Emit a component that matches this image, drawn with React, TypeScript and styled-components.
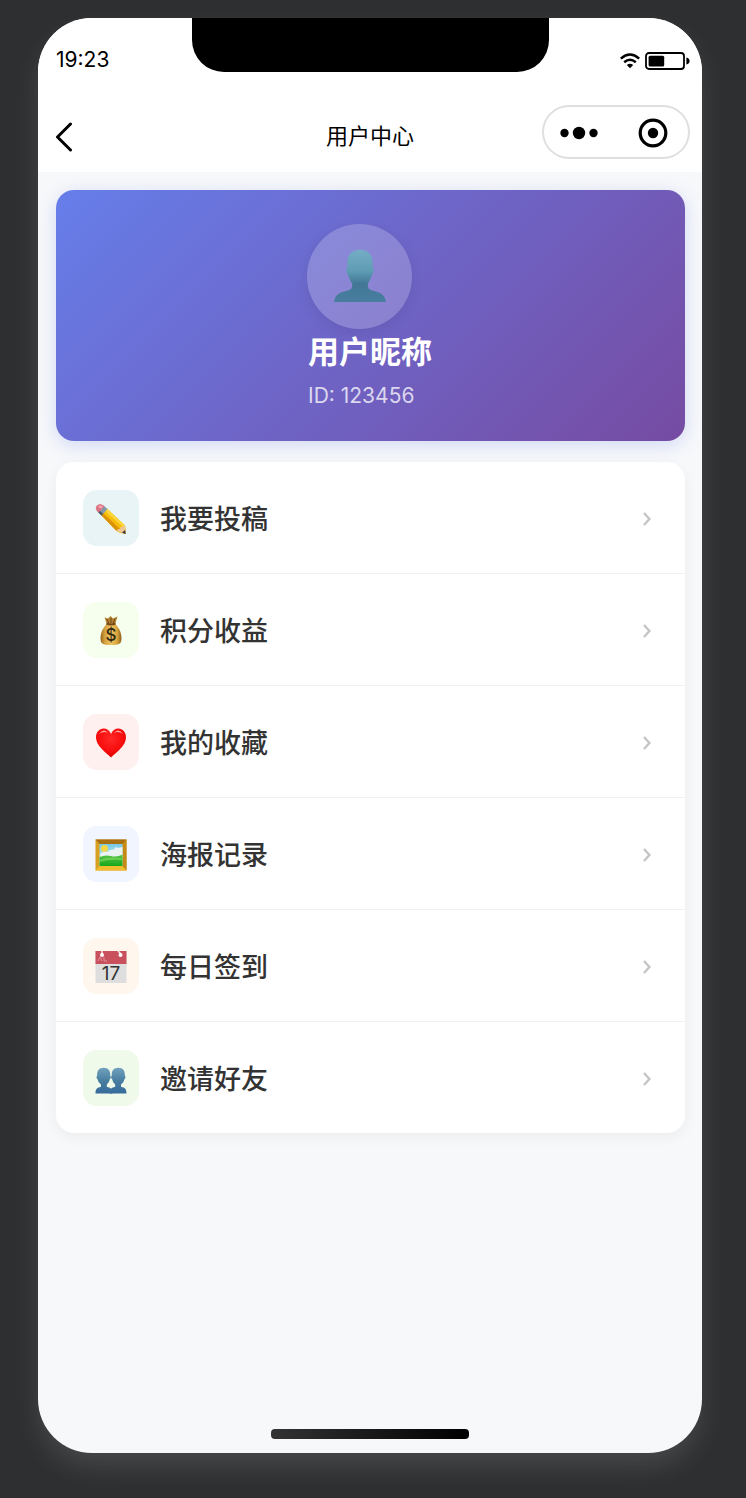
import React from 'react';
import styled, { createGlobalStyle } from 'styled-components';

const GlobalStyle = createGlobalStyle`
  * { box-sizing: border-box; }
  body {
    margin: 0;
    background: #2e2f31;
    font-family: Inter, "Noto Sans CJK SC", sans-serif;
    color: #000;
  }
  button { font: inherit; color: inherit; border: 0; background: none; padding: 0; cursor: pointer; }
  svg { display: block; }
`;

const Stage = styled.div`
  min-height: 100vh;
  display: flex;
  padding: 18px 44px 45px 38px;
`;

const Phone = styled.div`
  flex: 1;
  display: flex;
  flex-direction: column;
  overflow: hidden;
  border-radius: 54px;
  background: #f7f8fa;
  box-shadow: 0 14px 28px -2px rgba(205, 210, 205, 0.16);
`;

const Header = styled.header`
  background: #fff;
`;

const StatusBar = styled.div`
  display: grid;
  grid-template-columns: 1fr auto 1fr;
  align-items: center;
  height: 82px;
`;

const Time = styled.time`
  padding: 2px 0 0 18px;
  font-size: 21px;
  line-height: 26px;
`;

const Notch = styled.div`
  align-self: start;
  width: 357px;
  height: 54px;
  border-radius: 0 0 32px 32px;
  background: #000;
`;

const StatusIcons = styled.div`
  display: flex;
  justify-content: flex-end;
  align-items: center;
  gap: 5px;
  padding: 3px 12px 0 0;
`;

const NavBar = styled.div`
  display: grid;
  grid-template-columns: 1fr auto 1fr;
  align-items: center;
  height: 72px;
  padding: 0 12px;
`;

const BackButton = styled.button`
  justify-self: start;
  padding: 2px 0 0 4px;
`;

const Title = styled.h1`
  margin: 0;
  font-size: 22px;
  font-weight: 400;
  line-height: 32px;
`;

const Capsule = styled.div`
  justify-self: end;
  display: flex;
  justify-content: space-between;
  align-items: center;
  width: 148px;
  height: 54px;
  margin-bottom: 8px;
  padding: 2px 20px 0 15px;
  border: 2px solid #dfdfdf;
  border-radius: 27px;
`;

const CapsuleButton = styled.button``;

const Content = styled.main`
  flex: 1;
  display: flex;
  flex-direction: column;
  gap: 21px;
  padding: 18px 17px 18px 18px;
  overflow: hidden;
`;

const ProfileCard = styled.section`
  display: flex;
  justify-content: center;
  padding: 34px 27px 32px;
  border-radius: 18px;
  background: linear-gradient(135deg, #667eea 0%, #764ba2 100%);
  box-shadow: 0 4px 18px rgba(102, 126, 234, 0.26);
`;

const Profile = styled.div`
  display: flex;
  flex-direction: column;
  align-items: flex-start;
  width: 127px;
`;

const Avatar = styled.div`
  display: flex;
  align-items: center;
  justify-content: center;
  width: 105px;
  height: 105px;
  padding-bottom: 2px;
  border-radius: 50%;
  background: rgba(255, 255, 255, 0.2);
  box-shadow: 0 4px 14px rgba(0, 0, 0, 0.08);
`;

const Nickname = styled.h2`
  margin: 0;
  padding-left: 1px;
  color: #fff;
  font-size: 31px;
  font-weight: 700;
  line-height: 46px;
`;

const UserId = styled.p`
  margin: 8px 0 0;
  padding-left: 1px;
  color: rgba(255, 255, 255, 0.76);
  font-size: 21px;
  line-height: 26px;
`;

const Menu = styled.ul`
  margin: 0;
  padding: 0;
  list-style: none;
  border-radius: 18px;
  background: #fff;
  box-shadow: 0 4px 14px rgba(0, 0, 0, 0.05);
  overflow: hidden;
`;

const MenuItem = styled.li`
  padding-top: 1px;

  & + & {
    border-top: 1px solid #f0f0f1;
  }
`;

const MenuButton = styled.button`
  display: flex;
  align-items: center;
  gap: 21px;
  width: 100%;
  height: 110px;
  padding: 0 33px 0 27px;
  text-align: left;
`;

const IconTile = styled.span<{ $tint: string }>`
  display: flex;
  align-items: center;
  justify-content: center;
  width: 56px;
  height: 56px;
  padding-top: 2px;
  border-radius: 14px;
  background: ${(p) => p.$tint};
`;

const Label = styled.span`
  flex: 1;
  padding-top: 4px;
  color: #333;
  font-size: 27px;
  font-weight: 500;
  line-height: 38px;
`;

const HomeIndicator = styled.div`
  align-self: center;
  width: 198px;
  height: 10px;
  margin-bottom: 14px;
  border-radius: 4px;
  background: linear-gradient(90deg, #333, #000);
`;

const Wifi = () => (
  <svg width="20" height="16" viewBox="0 0 20 16" fill="none" stroke="#000" strokeWidth="2.5" aria-hidden="true">
    <path d="M.8 5.6Q10-2.6 19.2 5.6" />
    <path d="M4.2 9.2Q10 4.4 15.8 9.2" />
    <path d="M6.8 12Q10 9.4 13.2 12L10 15.3Z" fill="#000" stroke="none" />
  </svg>
);

const Battery = () => (
  <svg width="45" height="18" viewBox="0 0 45 18" aria-hidden="true">
    <rect x="1" y="1" width="38" height="16" rx="3" fill="none" stroke="#000" strokeWidth="1.8" />
    <rect x="3.6" y="3.8" width="15.6" height="10.6" rx="1.5" />
    <path d="M41.4 5.6C45.6 6 45.6 12 41.4 12.4Z" />
  </svg>
);

const Chevron = () => (
  <svg width="10" height="16" viewBox="0 0 10 16" fill="none" stroke="#c4c4c4" strokeWidth="2.3" aria-hidden="true">
    <path d="M2 3L7.400 9L2 15" />
  </svg>
);

const PersonIcon = () => (
  <svg width="54" height="54" viewBox="0 0 54 54" aria-hidden="true">
    <defs>
      <linearGradient id="person" x1="0" y1="0" x2="0" y2="1">
        <stop offset="0" stopColor="#73adc4" />
        <stop offset=".4" stopColor="#5f9db5" />
        <stop offset=".65" stopColor="#427895" />
        <stop offset="1" stopColor="#487da0" />
      </linearGradient>
    </defs>
    <path
      fill="url(#person)"
      d="M27 .8C35 .8 40 6 39.600 14.500C39.600 16.500 39.500 18 39.800 19.500C41.300 20 40.700 25 38.700 26C37.800 30 36.500 32 34.800 34.500V37C35 40 37 41.200 41 42C48.500 43.500 52 46.500 53 53H1C2 46.500 5.500 43.500 13 42C17 41.200 19 40 19.200 37V34.500C17.500 32 16.200 30 15.300 26C13.300 25 12.700 20 14.200 19.500C14.500 18 14.400 16.500 14.400 14.500C14 6 19 .8 27 .8Z"
    />
  </svg>
);

const PencilIcon = () => (
  <svg width="32" height="32" viewBox="0 0 32 32" aria-hidden="true">
    <path d="M6 12L12 5.500L30 22.500Q31.500 27 30.500 31Q25 30.500 21.500 28Z" fill="#f6bd0b" />
    <path d="M6 12L8 10L25 26L21.500 28Z" fill="#dc9206" />
    <path d="M10 8L12 5.500L30 22.500L28 24Z" fill="#ffd53e" />
    <path d="M21.500 28Q23 25 25 26Q25 23 28 24Q28 22 30 22.500L30.800 31Z" fill="#edc794" />
    <path d="M27 29.800L30 27L30.800 31Z" fill="#333" />
    <path d="M2.500 8.500L8.500 2.500L12.500 6L6.500 12.500Z" fill="#8399ab" />
    <path d="M2.500 8.500L4 7L8 11L6.500 12.500Z" fill="#46535d" />
    <path d="M2.500 8.500Q-.5 5.500 2 2.500Q5-.5 8.500 2.500L9.500 3.500L3.500 9.500Z" fill="#dc7181" />
    <path d="M3 4Q5 1 8 3.500L6 6Z" fill="#f3a2ae" />
  </svg>
);

const MoneyIcon = () => (
  <svg width="32" height="32" viewBox="0 0 32 32" aria-hidden="true">
    <defs>
      <linearGradient id="bag" x1="0" y1="0" x2="1" y2="0">
        <stop offset="0" stopColor="#96651b" />
        <stop offset=".2" stopColor="#d3a03e" />
        <stop offset=".5" stopColor="#f0c663" />
        <stop offset=".8" stopColor="#d6a23c" />
        <stop offset="1" stopColor="#8d5b18" />
      </linearGradient>
    </defs>
    <path d="M9.500 2.500L13 3.500L15.500 1L18 3.500L22.500 1.500L20 9.500H12Z" fill="#b48131" />
    <path d="M12 4L14 9M16 3L16 9M20 3.500L18 9" stroke="#714812" strokeWidth="1" />
    <path d="M12.500 8.500H19.500C23 11 26.500 17 26.500 23.500C26.500 29 24 30 16 30S5.500 29 5.500 23.500C5.500 17 9 11 12.500 8.500Z" fill="url(#bag)" />
    <path d="M11.500 8.500Q16 10.500 20.500 8.500" stroke="#754816" strokeWidth="2" fill="none" />
    <text x="16" y="25.500" textAnchor="middle" fontFamily="Inter, sans-serif" fontSize="17" fontWeight="500" fill="#30280f">$</text>
  </svg>
);

const HeartIcon = () => (
  <svg width="32" height="32" viewBox="0 0 32 32" aria-hidden="true">
    <defs>
      <radialGradient id="heart" cx=".48" cy=".36" r=".7">
        <stop offset="0" stopColor="#ff2828" />
        <stop offset=".6" stopColor="#f80c0c" />
        <stop offset="1" stopColor="#cf0000" />
      </radialGradient>
    </defs>
    <path d="M16 30.500C11 25.500 1 19 1 10.500C1 5 4.500 1.500 8.500 1.500C12 1.500 14.800 3.500 16 7C17.200 3.500 20 1.500 23.500 1.500C27.500 1.500 31 5 31 10.500C31 19 21 25.500 16 30.500Z" fill="url(#heart)" />
    <path d="M4 7Q8.500 .5 13 6Q8.500 3.500 4 7M19 6Q23.500 .5 28 7Q23.500 3.500 19 6" fill="#ffabab" />
  </svg>
);

const PictureIcon = () => (
  <svg width="32" height="32" viewBox="0 0 32 32" aria-hidden="true">
    <defs>
      <linearGradient id="sky" x1="0" y1="0" x2="0" y2="1">
        <stop offset="0" stopColor="#75c9e8" />
        <stop offset="1" stopColor="#e6f4ed" />
      </linearGradient>
      <linearGradient id="grass" x1="0" y1="0" x2="0" y2="1">
        <stop offset="0" stopColor="#59c747" />
        <stop offset="1" stopColor="#16a61c" />
      </linearGradient>
    </defs>
    <rect x=".5" y=".5" width="31" height="31" fill="#d7a021" />
    <path d="M.5.5H31.500L27.500 5H4.500Z" fill="#a86f13" />
    <path d="M.5 31.500L4.500 27H27.500L31.500 31.500Z" fill="#efbd2e" />
    <path d="M31.500.5V31.500L27.500 27V5Z" fill="#c48a15" />
    <rect x="4.500" y="5" width="23" height="22" fill="url(#sky)" />
    <circle cx="9.500" cy="9.500" r="3.500" fill="#f3d747" />
    <path d="M5 15Q8 12 12 13Q15 10 19 10.500Q20 7 23 9L27.500 8V18H5Z" fill="#ebf2f4" />
    <path d="M4.500 18Q10 15.500 16 17Q22 18.500 27.500 15.500V27H4.500Z" fill="url(#grass)" />
    <path d="M4.500 21Q14 17 27.500 19.500V21Q14 20 4.500 23Z" fill="#7ed65f" opacity=".7" />
  </svg>
);

const CalendarIcon = () => (
  <svg width="32" height="38" viewBox="0 -3 32 38" aria-hidden="true">
    <rect x=".5" y="0" width="31" height="32" fill="#dedede" />
    <rect x=".5" y="0" width="31" height="13" fill="#c9505d" />
    <path d="M3 10L5 6L7 10M9 6V10H12" fill="none" stroke="#df8f97" strokeWidth="1" />
    <path d="M7 0V3M23 0L26 3" stroke="#f7e4e4" strokeWidth="1.500" />
    <circle cx="7" cy="4" r="2" fill="#fff" />
    <circle cx="25.500" cy="4" r="2" fill="#fff" />
    <text x="16" y="29" textAnchor="middle" fontFamily="Inter, sans-serif" fontSize="19" fontWeight="400" fill="#333">17</text>
  </svg>
);

const FriendsIcon = () => (
  <svg width="32" height="32" viewBox="0 0 32 32" aria-hidden="true">
    <defs>
      <linearGradient id="friends" x1="0" y1="0" x2="0" y2="1">
        <stop offset="0" stopColor="#70a1bd" />
        <stop offset=".55" stopColor="#477c9f" />
        <stop offset="1" stopColor="#366b9c" />
      </linearGradient>
    </defs>
    <g fill="url(#friends)">
      <path d="M.5 30.500C.5 26 2 24.800 6 23.800V21.500C4 20 3.200 18.500 2.700 16.500C1.200 15.500 1.200 13 2.200 12.500C1.700 7.500 4.500 4.800 8.700 4.800S15.700 7.500 15.200 12.500C16.200 13 16.200 15.500 14.700 16.500C14.200 18.500 13.500 20 11.800 21.500V23.800C15.500 24.800 17.500 26 17.500 30.500Z" />
      <path d="M14.500 30.500C14.500 26 16.500 24.800 20.200 23.800V21.500C18.500 20 17.800 18.500 17.300 16.500C15.800 15.500 15.800 13 16.800 12.500C16.300 7.500 19.100 4.800 23.300 4.800S30.300 7.500 29.800 12.500C30.800 13 30.800 15.500 29.300 16.500C28.800 18.500 28 20 26 21.500V23.800C30 24.800 31.500 26 31.500 30.500Z" />
    </g>
  </svg>
);

const menu = [
  { label: '我要投稿', tint: '#e8f4f6', Icon: PencilIcon },
  { label: '积分收益', tint: '#f6ffed', Icon: MoneyIcon },
  { label: '我的收藏', tint: '#fff0f0', Icon: HeartIcon },
  { label: '海报记录', tint: '#f0f5ff', Icon: PictureIcon },
  { label: '每日签到', tint: '#fff7ee', Icon: CalendarIcon },
  { label: '邀请好友', tint: '#f0faeb', Icon: FriendsIcon },
];

export default function App() {
  return (
    <>
      <GlobalStyle />
      <Stage>
        <Phone>
          <Header>
            <StatusBar>
              <Time>19:23</Time>
              <Notch />
              <StatusIcons>
                <Wifi />
                <Battery />
              </StatusIcons>
            </StatusBar>
            <NavBar>
              <BackButton aria-label="返回">
                <svg width="20" height="30" viewBox="0 0 20 30" fill="none" stroke="#000" strokeWidth="3" strokeLinecap="round" strokeLinejoin="round">
                  <path d="M16.500 2L3.500 15L16.500 28" />
                </svg>
              </BackButton>
              <Title>用户中心</Title>
              <Capsule>
                <CapsuleButton aria-label="更多">
                  <svg width="40" height="14" viewBox="0 0 40 14">
                    <circle cx="5.500" cy="7" r="4.200" />
                    <circle cx="20" cy="7" r="6.200" />
                    <circle cx="34.500" cy="7" r="4.200" />
                  </svg>
                </CapsuleButton>
                <CapsuleButton aria-label="关闭">
                  <svg width="30" height="30" viewBox="0 0 30 30">
                    <circle cx="15" cy="15" r="12.800" fill="none" stroke="#000" strokeWidth="3.200" />
                    <circle cx="15" cy="15" r="5.200" />
                  </svg>
                </CapsuleButton>
              </Capsule>
            </NavBar>
          </Header>
          <Content>
            <ProfileCard>
              <Profile>
                <Avatar>
                  <PersonIcon />
                </Avatar>
                <Nickname>用户昵称</Nickname>
                <UserId>ID: 123456</UserId>
              </Profile>
            </ProfileCard>
            <Menu>
              {menu.map(({ label, tint, Icon }) => (
                <MenuItem key={label}>
                  <MenuButton>
                    <IconTile $tint={tint}>
                      <Icon />
                    </IconTile>
                    <Label>{label}</Label>
                    <Chevron />
                  </MenuButton>
                </MenuItem>
              ))}
            </Menu>
          </Content>
          <HomeIndicator />
        </Phone>
      </Stage>
    </>
  );
}
